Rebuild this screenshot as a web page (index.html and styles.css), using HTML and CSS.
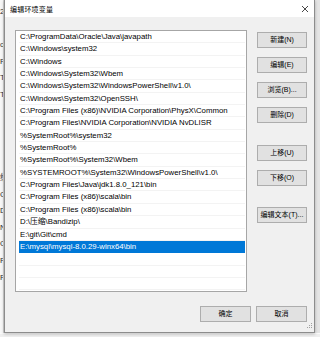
FILE: index.html
```html
<!DOCTYPE html>
<html lang="zh">
<head>
  <meta charset="UTF-8">
  <title>编辑环境变量</title>
  <link rel="stylesheet" href="styles.css">
</head>
<body>
  <div class="desktop">
    <div class="behind-left">
      <div class="ghost-line">2</div>
      <div class="ghost-line">&nbsp;</div>
      <div class="ghost-line">o</div>
      <div class="ghost-line">Pa</div>
      <div class="ghost-line">TE</div>
      <div class="ghost-line">TM</div>
      <div class="ghost-line">&nbsp;</div>
      <div class="ghost-line">&nbsp;</div>
      <div class="ghost-line">&nbsp;</div>
      <div class="ghost-line">&nbsp;</div>
      <div class="ghost-line">统</div>
      <div class="ghost-line">Co</div>
      <div class="ghost-line">Dr</div>
      <div class="ghost-line">NU</div>
      <div class="ghost-line">OS</div>
      <div class="ghost-line">Pa</div>
      <div class="ghost-line">PA</div>
    </div>

    <div class="dialog">
      <div class="titlebar">
        <span class="title">编辑环境变量</span>
        <svg class="close" width="8" height="8" viewBox="0 0 8 8">
          <path d="M1 1 L7 7 M7 1 L1 7" stroke="#333" stroke-width="0.9" fill="none"/>
        </svg>
      </div>

      <div class="dialog-body">
        <div class="path-list" id="pathList"></div>
        <div class="side-buttons">
          <button class="btn">新建(N)</button>
          <button class="btn">编辑(E)</button>
          <button class="btn">浏览(B)...</button>
          <button class="btn">删除(D)</button>
          <button class="btn btn-gap">上移(U)</button>
          <button class="btn">下移(O)</button>
          <button class="btn btn-gap-sm">编辑文本(T)...</button>
        </div>
      </div>

      <div class="dialog-footer">
        <button class="btn btn-wide">确定</button>
        <button class="btn btn-wide">取消</button>
      </div>

      <svg class="grip" width="8" height="8" viewBox="0 0 8 8">
        <rect x="6" y="0" width="1" height="1" fill="#a0a0a0"/>
        <rect x="4" y="2" width="1" height="1" fill="#a0a0a0"/>
        <rect x="6" y="2" width="1" height="1" fill="#a0a0a0"/>
        <rect x="2" y="4" width="1" height="1" fill="#a0a0a0"/>
        <rect x="4" y="4" width="1" height="1" fill="#a0a0a0"/>
        <rect x="6" y="4" width="1" height="1" fill="#a0a0a0"/>
      </svg>
    </div>

    <div class="behind-right"></div>
  </div>
  <div class="taskbar-edge"></div>

  <script>
    // 环境变量 Path 的各项
    const paths = [
      'C:\\ProgramData\\Oracle\\Java\\javapath',
      'C:\\Windows\\system32',
      'C:\\Windows',
      'C:\\Windows\\System32\\Wbem',
      'C:\\Windows\\System32\\WindowsPowerShell\\v1.0\\',
      'C:\\Windows\\System32\\OpenSSH\\',
      'C:\\Program Files (x86)\\NVIDIA Corporation\\PhysX\\Common',
      'C:\\Program Files\\NVIDIA Corporation\\NVIDIA NvDLISR',
      '%SystemRoot%\\system32',
      '%SystemRoot%',
      '%SystemRoot%\\System32\\Wbem',
      '%SYSTEMROOT%\\System32\\WindowsPowerShell\\v1.0\\',
      'C:\\Program Files\\Java\\jdk1.8.0_121\\bin',
      'C:\\Program Files (x86)\\scala\\bin',
      'C:\\Program Files (x86)\\scala\\bin',
      'D:\\压缩\\Bandizip\\',
      'E:\\git\\Git\\cmd',
      'E:\\mysql\\mysql-8.0.29-winx64\\bin',
      '',
      '',
      ''
    ];
    const selected = 17;
    const list = document.getElementById('pathList');

    paths.forEach((p, idx) => {
      const row = document.createElement('div');
      row.className = 'path-row' + (idx === selected ? ' selected' : '');
      row.textContent = p;
      list.appendChild(row);
    });
  </script>
</body>
</html>
```

FILE: styles.css
```css
html, body {
  margin: 0;
  padding: 0;
}
body {
  width: 320px;
  height: 337px;
  overflow: hidden;
  background: #ececec;
  font-family: 'Liberation Sans', 'Noto Sans CJK SC', sans-serif;
  color: #000;
}
.desktop {
  display: flex;
  height: 333px;
}
.behind-left {
  width: 4px;
  overflow: hidden;
  background: #f7f7f7;
  border-right: 1px solid #d0d0d0;
  box-sizing: border-box;
  padding-top: 4px;
  font-size: 8px;
  color: #333;
}
.ghost-line {
  height: 16.6px;
  line-height: 16px;
  white-space: nowrap;
}
.dialog {
  position: relative;
  width: 311px;
  flex: none;
  box-sizing: border-box;
  background: #f0f0f0;
  border: 1px solid #8c8c8c;
  border-top: none;
  box-shadow: 0 1px 3px rgba(0, 0, 0, 0.25);
  display: flex;
  flex-direction: column;
}
.behind-right {
  flex: 1;
  background: #e4e4e4;
}
.taskbar-edge {
  height: 4px;
  background: #efefef;
  border-top: 1px solid #fafafa;
}
.titlebar {
  height: 17px;
  background: #fff;
  display: flex;
  align-items: center;
  justify-content: space-between;
  padding: 0 5px 0 5px;
}
.title {
  font-size: 7px;
  letter-spacing: 0.2px;
}
.close {
  margin-right: 0;
}
.dialog-body {
  display: flex;
  gap: 10px;
  padding: 13px 7px 0 10px;
}
.path-list {
  width: 232px;
  height: 262px;
  box-sizing: border-box;
  background: #fff;
  border: 1px solid #a6a6a6;
  padding: 0 1px 0 3px;
  overflow: hidden;
}
.path-row {
  height: 12.35px;
  line-height: 12.35px;
  box-sizing: border-box;
  padding-left: 1px;
  font-size: 7.8px;
  white-space: nowrap;
  border-bottom: 1px solid #f3f3f3;
}
.path-row.selected {
  background: #0078d7;
  color: #fff;
  border-bottom-color: #0078d7;
}
.side-buttons {
  display: flex;
  flex-direction: column;
  gap: 9px;
  padding-top: 2px;
}
.btn {
  width: 50px;
  height: 16px;
  padding: 0;
  box-sizing: border-box;
  background: #e1e1e1;
  border: 1px solid #adadad;
  border-radius: 0;
  font-family: 'Liberation Sans', 'Noto Sans CJK SC', sans-serif;
  font-size: 7px;
  color: #000;
  line-height: 14px;
}
.btn-gap {
  margin-top: 13px;
}
.btn-gap-sm {
  margin-top: 12px;
}
.dialog-footer {
  display: flex;
  justify-content: flex-end;
  gap: 5px;
  padding: 14px 7px 0 0;
}
.btn-wide {
  width: 51px;
}
.grip {
  position: absolute;
  right: 1px;
  bottom: 1px;
}
```
